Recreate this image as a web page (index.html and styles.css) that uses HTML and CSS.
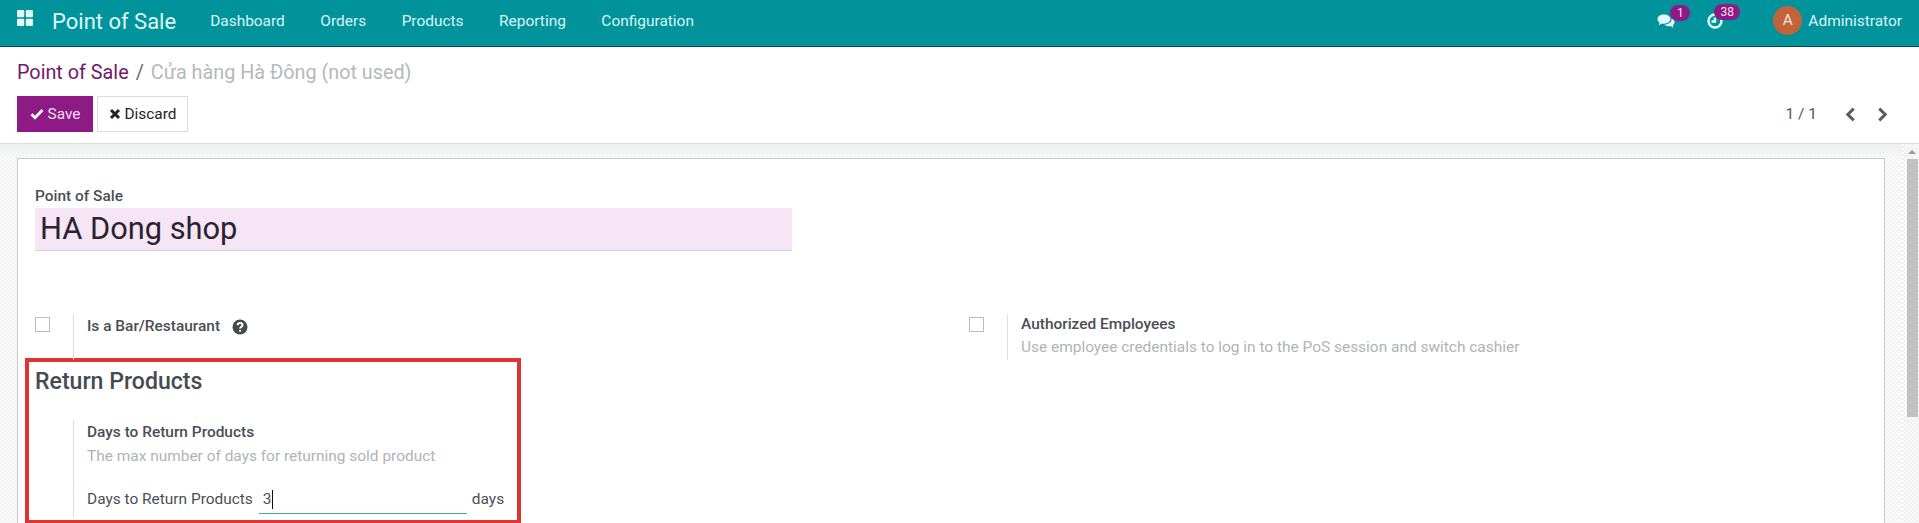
FILE: index.html
```html
<!DOCTYPE html>
<html lang="en">
<head>
<meta charset="utf-8">
<title>Point of Sale</title>
<link rel="stylesheet" href="styles.css">
</head>
<body>
<header class="navbar">
  <svg class="apps" viewBox="0 0 16 16" width="16" height="16"><rect x="0" y="0" width="7.2" height="7.2" rx="1.2"/><rect x="8.8" y="0" width="7.2" height="7.2" rx="1.2"/><rect x="0" y="8.8" width="7.2" height="7.2" rx="1.2"/><rect x="8.8" y="8.8" width="7.2" height="7.2" rx="1.2"/></svg>
  <span class="brand">Point of Sale</span>
  <nav class="menu"><a>Dashboard</a><a>Orders</a><a>Products</a><a>Reporting</a><a>Configuration</a></nav>
  <div class="systray">
    <div class="tray-item chat">
      <svg viewBox="0 0 18 16" width="18" height="16"><path d="M7 1.5c3.6 0 6.5 2 6.5 4.6S10.600 10.700 7 10.700c-.8 0-1.500-.1-2.200-.3L1.800 12.300l.8-2.700C1.100 8.700.5 7.500.5 6.100.5 3.500 3.400 1.500 7 1.500z"/><path d="M14.600 5.500c1.700.8 2.900 2.100 2.900 3.700 0 1.200-.6 2.200-1.700 3l.7 2.500-2.900-1.700c-.6.1-1.200.2-1.800.2-1.900 0-3.500-.7-4.400-1.700 4 .1 7.700-2.300 7.200-6z"/></svg>
      <span class="badge">1</span>
    </div>
    <div class="tray-item clock">
      <svg viewBox="0 0 16 16" width="16" height="16"><circle cx="8" cy="8" r="6.500"/><path d="M8 4.500V8.500H4.500"/></svg>
      <span class="badge">38</span>
    </div>
    <div class="user"><span class="avatar">A</span><span>Administrator</span></div>
  </div>
</header>

<section class="control">
  <div class="crumbs"><a>Point of Sale</a><span class="sep">/</span><span class="current">Cửa hàng Hà Đông (not used)</span></div>
  <div class="actions">
    <div class="buttons">
      <button class="btn primary"><svg viewBox="0 0 14 12" width="14" height="12"><path d="M1.500 6.200 5 9.700 12.500 2"/></svg>Save</button>
      <button class="btn plain"><svg viewBox="0 0 12 12" width="12" height="12"><path d="M2 2 10 10M10 2 2 10"/></svg>Discard</button>
    </div>
    <div class="pager">
      <span class="count">1 / 1</span>
      <svg viewBox="0 0 10 14" width="11" height="15"><path d="M8 1.500 2.500 7 8 12.500"/></svg>
      <svg viewBox="0 0 10 14" width="11" height="15"><path d="M2 1.500 7.500 7 2 12.500"/></svg>
    </div>
  </div>
</section>

<main class="workspace">
  <div class="canvas">
    <article class="sheet">
      <label class="name-label">Point of Sale</label>
      <div class="name-field">HA Dong shop</div>
      <div class="settings">
        <div class="setting">
          <span class="check"></span>
          <div class="setting-body">
            <div class="setting-title with-help">Is a Bar/Restaurant
              <svg viewBox="0 0 16 16" width="16" height="16"><circle cx="8" cy="8" r="7.500" class="help-bg"/><path class="help-mark" d="M5.600 6.200c.1-1.400 1.100-2.200 2.500-2.200s2.400.8 2.400 2c0 1.800-2.400 1.800-2.400 3.400"/><circle class="help-dot" cx="8.100" cy="11.800" r="1.100"/></svg>
            </div>
          </div>
        </div>
        <div class="setting">
          <span class="check"></span>
          <div class="setting-body">
            <div class="setting-title">Authorized Employees</div>
            <div class="setting-desc">Use employee credentials to log in to the PoS session and switch cashier</div>
          </div>
        </div>
      </div>
      <section class="return-box">
        <h2>Return Products</h2>
        <div class="return-body">
          <div class="setting-title">Days to Return Products</div>
          <div class="setting-desc">The max number of days for returning sold product</div>
          <div class="field-row">
            <span>Days to Return Products</span>
            <span class="input"><span>3</span><i class="caret"></i></span>
            <span>days</span>
          </div>
        </div>
      </section>
    </article>
  </div>
  <aside class="scrollbar">
    <span class="arrow"></span>
    <span class="thumb"></span>
  </aside>
</main>
</body>
</html>
```
FILE: styles.css
```css
* { box-sizing: border-box; }
html, body { height: 100%; }
body {
  margin: 0;
  height: 523px;
  overflow: hidden;
  display: flex;
  flex-direction: column;
  font-family: Roboto, "Noto Sans CJK SC", sans-serif;
  font-size: 15.45px;
  color: #4c4c4c;
  background: #fff;
}

/* navbar */
.navbar {
  flex: 0 0 47px;
  display: flex;
  align-items: center;
  background: #00939b;
  border-bottom: 1px solid #06494e;
  color: #d9f5f5;
  padding: 0 17px;
}
.apps { fill: #e4fbfb; margin: -11px 0 0 0; }
.brand { font-size: 22px; margin: -4px 0 0 19px; color: #def7f7; }
.menu { display: flex; gap: 35.5px; margin: -5px 0 0 34px; }
.systray { margin-left: auto; display: flex; align-items: center; }
.tray-item { position: relative; display: flex; margin-top: -5px; }
.tray-item.chat { margin-right: 32px; }
.chat svg { fill: #e4fbfb; }
.clock svg { fill: none; stroke: #e4fbfb; stroke-width: 2.400; }
.tray-item.clock { margin-right: 50px; }
.badge {
  position: absolute;
  top: -8px;
  left: 13px;
  min-width: 20px;
  height: 16px;
  padding: 0 5px;
  border-radius: 8px;
  background: #8e1a85;
  color: #f4dff2;
  font-size: 12px;
  line-height: 16px;
  text-align: center;
}
.clock .badge { left: 7px; top: -9px; min-width: 26px; }
.user { display: flex; align-items: center; gap: 6px; margin-top: -5px; }
.avatar {
  width: 29px;
  height: 29px;
  border-radius: 50%;
  background: #c4623a;
  color: #f6e7df;
  font-size: 15.4px;
  line-height: 29px;
  text-align: center;
}

/* control panel */
.control {
  flex: 0 0 97px;
  padding: 13px 17px 0;
  border-bottom: 1px solid #dcdcdc;
}
.crumbs { font-size: 19.800px; line-height: 26px; display: flex; }
.crumbs a { color: #701a6b; }
.sep { color: #6a6a6a; margin: 0 7px; }
.current { color: #b5b8bc; }
.actions { display: flex; justify-content: space-between; margin-top: 10px; }
.buttons { display: flex; gap: 4px; }
.btn {
  height: 36px;
  display: flex;
  align-items: center;
  justify-content: center;
  gap: 4px;
  font: 15.4px Roboto, sans-serif;
  padding: 0;
}
.btn svg { fill: none; stroke-width: 2.800; }
.primary { width: 76px; background: #8e1a85; color: #f2dff0; border: 1px solid #8e1a85; }
.primary svg { stroke: #fff; }
.plain { width: 91px; background: #fff; color: #222; border: 1px solid #dcdcdc; }
.plain svg { stroke: #222; stroke-width: 3; }
.pager { display: flex; align-items: center; margin-right: 14px; color: #555; }
.pager .count { margin-right: 28px; }
.pager svg { fill: none; stroke: #5c5c5c; stroke-width: 2.800; margin-right: 21px; }
.pager svg:last-child { margin-right: 0; }

/* content */
.workspace { flex: 1; display: flex; min-height: 0; }
.canvas {
  flex: 0 0 1902px;
  padding: 14px 17px 0;
  overflow: hidden;
  background:
    linear-gradient(#eeeff0, rgba(248, 248, 249, 0) 14px),
    repeating-conic-gradient(#f3f3f3 0 25%, #fbfbfb 0 50%) 0 0 / 4px 4px;
}
.sheet {
  height: 500px;
  background: #fff;
  border: 1px solid #c8c9cd;
  padding: 26px 17px 0;
}
.name-label { display: block; font-weight: 500; line-height: 22px; color: #4a4f55; }
.name-field {
  width: 757px;
  height: 43px;
  margin-top: 1px;
  background: #f6e5f5;
  border-bottom: 1px solid #d9cfd9;
  font-size: 30.800px;
  line-height: 41px;
  padding-left: 5px;
  color: #2b2230;
}
.settings { display: grid; grid-template-columns: 934px 1fr; margin-top: 63px; }
.setting { display: flex; }
.check {
  flex: 0 0 15px;
  height: 15px;
  margin-top: 3px;
  border: 1px solid #b9bcc0;
  background: #fff;
}
.setting-body { margin-left: 23px; border-left: 1px solid #dcdee0; padding-left: 13px; }
.setting-title { font-weight: 500; color: #4a4f55; line-height: 22px; }
.settings .setting:last-child .setting-title { margin-top: -1px; }
.with-help { display: flex; align-items: center; gap: 12px; height: 25px; line-height: 27px; }
.with-help svg { margin-top: 1px; }
.help-bg { fill: #454a50; }
.help-mark { fill: none; stroke: #fff; stroke-width: 2; }
.help-dot { fill: #fff; }
.setting-desc { color: #b0b3b8; line-height: 24px; }
.settings .setting:last-child .setting-body { height: 46px; }
.return-box {
  width: 496px;
  height: 166px;
  margin: -2px 0 0 -10px;
  border: 4px solid #dd3434;
  padding: 0 0 0 6px;
}
.return-box h2 {
  margin: 5px 0 0;
  font-size: 23.100px;
  font-weight: 500;
  line-height: 30px;
  color: #454b52;
}
.return-body {
  margin: 23px 0 0 38px;
  padding: 1px 0 0 13px;
  border-left: 1px solid #dcdee0;
  height: 98px;
}
.return-body .setting-desc { padding-top: 1px; }
.field-row { display: flex; align-items: flex-start; margin-top: 20px; line-height: 22px; color: #4a4f55; }
.input {
  width: 208px;
  height: 26px;
  margin: 0 5px 0 6px;
  padding-left: 4px;
  border-bottom: 1px solid #3aa5ad;
  display: flex;
}
.caret { width: 1px; height: 19px; margin-top: 2px; background: #111; }

/* scrollbar */
.scrollbar {
  flex: 1;
  display: flex;
  flex-direction: column;
  align-items: center;
  padding-left: 3px;
  background: repeating-conic-gradient(#efefef 0 25%, #fbfbfb 0 50%) 0 0 / 4px 4px;
}
.arrow {
  width: 0;
  height: 0;
  margin-top: 6px;
  border-left: 4px solid transparent;
  border-right: 4px solid transparent;
  border-bottom: 4px solid #9a9a9a;
}
.thumb { width: 11px; height: 258px; margin-top: 5px; background: #c1c1c1; }
```
